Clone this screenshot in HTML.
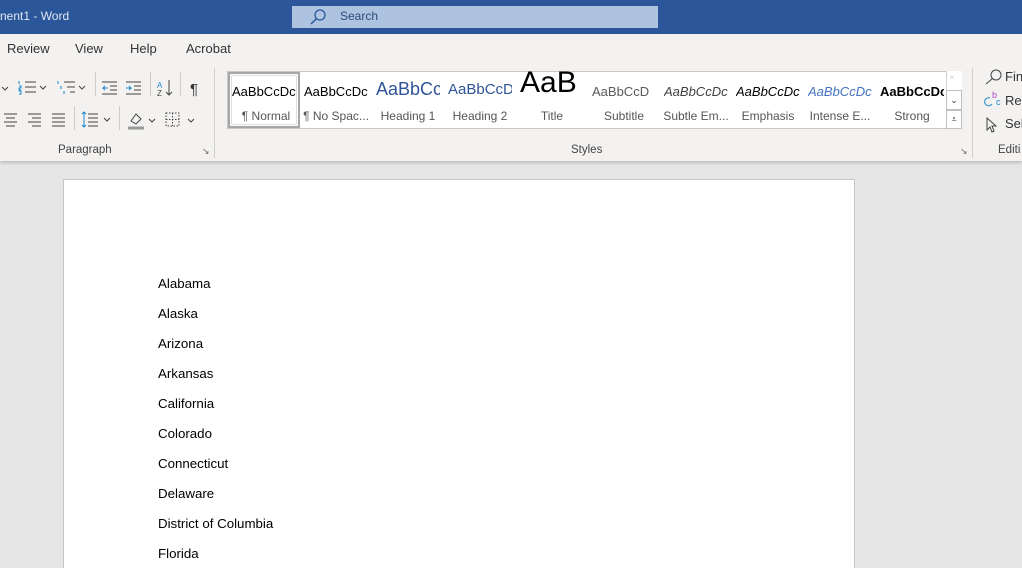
<!DOCTYPE html>
<html><head><meta charset="utf-8"><style>
*{margin:0;padding:0;box-sizing:border-box}
html,body{width:1022px;height:568px;overflow:hidden}
body{background:#e6e6e6;font-family:"Segoe UI","Liberation Sans",sans-serif;position:relative}
.abs{position:absolute}
#title{left:0;top:0;width:1022px;height:34px;background:#2b579a;color:#fff}
#tabs{left:0;top:34px;width:1022px;height:30px;background:#f3f2f1;font-size:13px;color:#333}
#ribbon{left:0;top:64px;width:1022px;height:97px;background:#f3f2f1;box-shadow:0 2px 3px rgba(0,0,0,.18)}
.t{position:absolute;white-space:nowrap}
.gal{left:227px;top:71px;width:735px;height:58px;background:#fff;border:1px solid #c8c8c8}
.it{position:absolute;top:0;width:72px;height:56px;text-align:center}
.it .s{position:absolute;top:12px;left:4px;width:64px;font-size:13px;overflow:hidden;white-space:nowrap;text-align:left}
.it .n{position:absolute;top:37px;left:0;width:72px;font-size:12px;color:#555}
#page{left:63px;top:179px;width:792px;height:389px;background:#fff;border:1px solid #c6c6c6;border-bottom:none}
.l{position:absolute;left:94px;font-size:13.3px;color:#000;font-family:"Liberation Sans",sans-serif}
</style></head><body>
<div id="title" class="abs">
 <div class="t" style="left:0;top:9px;font-size:12px;color:#dfe6f1">nent1 - Word</div>
 <div class="abs" style="left:292px;top:6px;width:366px;height:22px;background:#aec3e0"></div>
 <svg class="abs" style="left:308px;top:8px" width="20" height="18"><circle cx="12" cy="7" r="5" fill="none" stroke="#2b579a" stroke-width="1.3"/><line x1="8.5" y1="10.5" x2="3" y2="16" stroke="#2b579a" stroke-width="1.5"/></svg>
 <div class="t" style="left:340px;top:9px;font-size:12px;color:#2b4a7a">Search</div>
</div>
<div id="tabs" class="abs">
 <div class="t" style="left:7px;top:7px">Review</div>
 <div class="t" style="left:75px;top:7px">View</div>
 <div class="t" style="left:130px;top:7px">Help</div>
 <div class="t" style="left:186px;top:7px">Acrobat</div>
</div>
<div id="ribbon" class="abs">
 <svg class="abs" style="left:0;top:10px" width="214" height="66" stroke="#444" fill="none" stroke-width="1">
  <path d="M2 13l3 3 3-3"/>
  <path d="M25 8h11M25 13h11M25 18h11"/><path d="M19 7v3M19 12h2v2h-2v2h2M19 17h2v3h-2" stroke="#1e88d0"/><path d="M40 12l3 3 3-3"/>
  <path d="M64 8h11M67 13h8M70 18h5"/><path d="M58 7v3M61 12v3M64 17v3" stroke="#1e88d0"/><path d="M79 12l3 3 3-3"/>
  <path d="M102 8h15M110 12h7M110 16h7M102 20h15"/><path d="M108 14h-5l2-2m-2 2l2 2" stroke="#1e88d0"/>
  <path d="M126 8h15M134 12h7M134 16h7M126 20h15"/><path d="M126 14h5l-2-2m2 2l-2 2" stroke="#1e88d0"/>
  <text x="157" y="14" font-size="8" fill="#1e88d0" stroke="none">A</text><text x="157" y="22" font-size="8" fill="#444" stroke="none">Z</text><path d="M169 6v15m-3-3l3 3 3-3"/>
  <text x="190" y="20" font-size="15" fill="#333" stroke="none">¶</text>
  <path d="M4 40h13M6 44h9M4 48h13M6 52h9"/><path d="M28 40h13M32 44h9M28 48h13M32 52h9"/><path d="M52 40h13M52 44h13M52 48h13M52 52h13"/>
  <path d="M88 40h10M88 44h10M88 48h10M88 52h10"/><path d="M84 38v15M82 40l2-2 2 2M82 51l2 2 2-2" stroke="#1e88d0"/><path d="M104 44l3 3 3-3"/>
  <path d="M128 54h16" stroke="#999" stroke-width="3"/><path d="M131 47l5-7 5 5-5 5z"/><path d="M149 45l3 3 3-3"/>
  <rect x="166" y="39" width="13" height="13" stroke-dasharray="1.5 1.5"/><path d="M172.5 39v13M166 45.5h13" stroke-dasharray="1.5 1.5"/><path d="M188 45l3 3 3-3"/>
 </svg>
 <div class="abs" style="left:95px;top:8px;width:1px;height:24px;background:#ccc"></div>
 <div class="abs" style="left:150px;top:8px;width:1px;height:24px;background:#ccc"></div>
 <div class="abs" style="left:180px;top:8px;width:1px;height:24px;background:#ccc"></div>
 <div class="abs" style="left:74px;top:42px;width:1px;height:24px;background:#ccc"></div>
 <div class="abs" style="left:119px;top:42px;width:1px;height:24px;background:#ccc"></div>
 <div class="t" style="left:58px;top:80px;font-size:11.5px;color:#444">Paragraph</div>
 <div class="t" style="left:202px;top:82px;font-size:9px;color:#666">↘</div>
 <div class="abs" style="left:214px;top:4px;width:1px;height:90px;background:#d0d0d0"></div>
 <div class="t" style="left:571px;top:80px;font-size:11.5px;color:#444">Styles</div>
 <div class="t" style="left:960px;top:82px;font-size:9px;color:#666">↘</div>
 <div class="abs" style="left:972px;top:4px;width:1px;height:90px;background:#d0d0d0"></div>
 <svg class="abs" style="left:984px;top:4px" width="20" height="68" fill="none" stroke="#444"><circle cx="12" cy="7" r="5"/><path d="M8.5 10.5L2 16"/><text x="8" y="30" font-size="9" fill="#b548c6" stroke="none">b</text><text x="12" y="37" font-size="9" fill="#1e88d0" stroke="none">c</text><path d="M6 30a4 4 0 1 0 2 6" stroke="#1e88d0"/><path d="M3 50l9 8h-4l2 5-2 1-2-5-3 3z"/></svg>
 <div class="t" style="left:1005px;top:5px;font-size:13px;color:#333">Find</div>
 <div class="t" style="left:1005px;top:29px;font-size:13px;color:#333">Rep</div>
 <div class="t" style="left:1005px;top:52px;font-size:13px;color:#333">Sele</div>
 <div class="t" style="left:998px;top:80px;font-size:11.5px;color:#444">Editi</div>
</div>
<div class="abs gal">
 <div class="it" style="left:0;border:2px solid #a6a6a6;outline:1px solid #e0e0e0;outline-offset:-4px"><div class="s" style="top:10px;left:2px">AaBbCcDc</div><div class="n" style="top:35px">¶ Normal</div></div>
 <div class="it" style="left:72px"><div class="s">AaBbCcDc</div><div class="n">¶ No Spac...</div></div>
 <div class="it" style="left:144px"><div class="s" style="font-size:18px;top:7px;color:#2f5496">AaBbCc</div><div class="n">Heading 1</div></div>
 <div class="it" style="left:216px"><div class="s" style="font-size:15px;top:9px;color:#2f5496">AaBbCcD</div><div class="n">Heading 2</div></div>
 <div class="it" style="left:288px"><div class="s" style="font-size:30px;top:-6px;color:#000">AaB</div><div class="n">Title</div></div>
 <div class="it" style="left:360px"><div class="s" style="color:#5a5a5a">AaBbCcD</div><div class="n">Subtitle</div></div>
 <div class="it" style="left:432px"><div class="s" style="color:#404040;font-style:italic">AaBbCcDc</div><div class="n">Subtle Em...</div></div>
 <div class="it" style="left:504px"><div class="s" style="font-style:italic">AaBbCcDc</div><div class="n">Emphasis</div></div>
 <div class="it" style="left:576px"><div class="s" style="color:#4472c4;font-style:italic">AaBbCcDc</div><div class="n">Intense E...</div></div>
 <div class="it" style="left:648px"><div class="s" style="font-weight:bold">AaBbCcDc</div><div class="n">Strong</div></div>
 <div class="abs" style="left:718px;top:-1px;width:16px;height:58px;border-left:1px solid #d0d0d0;background:#fff"></div>
 <div class="abs" style="left:718px;top:18px;width:16px;height:20px;border:1px solid #c0c0c0;font-size:9px;text-align:center;line-height:18px;color:#333">⌄</div>
 <div class="abs" style="left:718px;top:38px;width:16px;height:19px;border:1px solid #c0c0c0;font-size:9px;text-align:center;line-height:17px;color:#333">⩡</div>
 <div class="abs" style="left:722px;top:3px;font-size:8px;color:#bbb">^</div>
</div>
<div id="page" class="abs">
 <div class="l" style="top:96px">Alabama</div>
 <div class="l" style="top:126px">Alaska</div>
 <div class="l" style="top:156px">Arizona</div>
 <div class="l" style="top:186px">Arkansas</div>
 <div class="l" style="top:216px">California</div>
 <div class="l" style="top:246px">Colorado</div>
 <div class="l" style="top:276px">Connecticut</div>
 <div class="l" style="top:306px">Delaware</div>
 <div class="l" style="top:336px">District of Columbia</div>
 <div class="l" style="top:366px">Florida</div>
</div>
</body></html>
